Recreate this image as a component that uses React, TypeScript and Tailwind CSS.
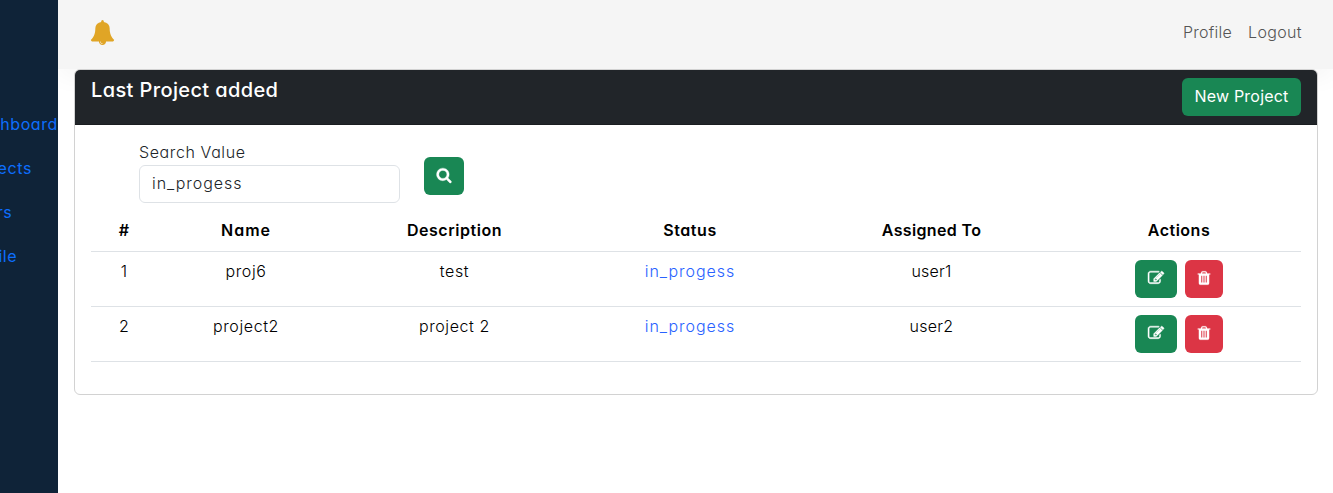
import type { ReactNode } from "react";

const paths = {
  bell: "M912 1696q0-16-16-16-59 0-101.5-42.5t-42.5-101.5q0-16-16-16t-16 16q0 73 51.5 124.5t124.5 51.5q16 0 16-16zm816-288q0 52-38 90t-90 38h-448q0 106-75 181t-181 75-181-75-75-181h-448q-52 0-90-38t-38-90q50-42 91-88t85-119.5 74.5-158.5 50-206 19.5-260q0-152 117-282.5t307-158.5q-8-19-8-39 0-40 28-68t68-28 68 28 28 68q0 20-8 39 190 28 307 158.5t117 282.5q0 139 19.5 260t50 206 74.5 158.5 85 119.5 91 88z",
  search:
    "M1216 832q0-185-131.5-316.5t-316.5-131.5-316.5 131.5-131.5 316.5 131.5 316.5 316.5 131.5 316.5-131.5 131.5-316.5zm512 832q0 52-38 90t-90 38q-54 0-90-38l-343-342q-179 124-399 124-143 0-273.5-55.5t-225-150-150-225-55.5-273.5 55.5-273.5 150-225 225-150 273.5-55.5 273.5 55.5 225 150 150 225 55.5 273.5q0 220-124 399l343 343q37 37 37 90z",
  edit: "M888 1184l116-116-152-152-116 116v56h96v96h56zm440-720q-16-16-33 1l-350 350q-17 17-1 33t33-1l350-350q17-17 1-33zm80 594v190q0 119-84.5 203.5t-203.5 84.5h-832q-119 0-203.5-84.5t-84.5-203.5v-832q0-119 84.5-203.5t203.5-84.5h832q63 0 117 25 15 7 18 23 3 17-9 29l-49 49q-14 14-32 8-23-6-45-6h-832q-66 0-113 47t-47 113v832q0 66 47 113t113 47h832q66 0 113-47t47-113v-126q0-13 9-22l64-64q15-15 35-7t20 29zm-96-738l288 288-672 672h-288v-288zm444 132l-92 92-288-288 92-92q28-28 68-28t68 28l152 152q28 28 28 68t-28 68z",
  trash:
    "M704 1376v-704q0-14-9-23t-23-9h-64q-14 0-23 9t-9 23v704q0 14 9 23t23 9h64q14 0 23-9t9-23zm256 0v-704q0-14-9-23t-23-9h-64q-14 0-23 9t-9 23v704q0 14 9 23t23 9h64q14 0 23-9t9-23zm256 0v-704q0-14-9-23t-23-9h-64q-14 0-23 9t-9 23v704q0 14 9 23t23 9h64q14 0 23-9t9-23zm-544-992h448l-48-117q-7-9-17-11h-317q-10 2-17 11zm928 32v64q0 14-9 23t-23 9h-96v948q0 83-47 143.5t-113 60.5h-832q-66 0-113-58.5t-47-141.5v-952h-96q-14 0-23-9t-9-23v-64q0-14 9-23t23-9h309l70-167q15-37 54-63t79-26h320q40 0 79 26t54 63l70 167h309q14 0 23 9t9 23z",
};

function Icon({ name, className }: { name: keyof typeof paths; className: string }) {
  return (
    <svg viewBox="0 0 1792 1792" fill="currentColor" stroke="currentColor" className={`shrink-0 overflow-visible ${className}`}>
      <path d={paths[name]} />
    </svg>
  );
}

function Cell({ children, className = "" }: { children: ReactNode; className?: string }) {
  return (
    <td className={`border-b border-[#dee2e6] p-2 text-center align-top leading-[22px] ${className}`}>{children}</td>
  );
}

const columns = [
  { label: "#", style: "w-[66px]" },
  { label: "Name", style: "w-[178px] tracking-[1px]" },
  { label: "Description", style: "w-[239px] tracking-[0.55px]" },
  { label: "Status", style: "w-[232px] tracking-[0.6px]" },
  { label: "Assigned To", style: "w-[251px] tracking-[0.35px]" },
  { label: "Actions", style: "w-[244px] tracking-[0.5px]" },
];

const rows = [
  { id: 1, name: "proj6", description: "test", status: "in_progess", user: "user1" },
  { id: 2, name: "project2", description: "project 2", status: "in_progess", user: "user2" },
];

export default function App() {
  return (
    <div className="flex h-[493px] w-full overflow-hidden bg-white font-['Inter',sans-serif] text-base leading-6 font-light text-[#212529] [font-feature-settings:'cv11']">
      <aside className="z-10 flex w-[58px] shrink-0 flex-col items-end gap-5 overflow-hidden bg-[#0f2338] pt-28 font-normal text-[#0d6efd]">
        <a className="tracking-[0.6px]">Dashboard</a>
        <a className="mr-[26px] tracking-[0.6px]">Projects</a>
        <a className="mr-[46px] tracking-[0.4px]">Users</a>
        <a className="mr-[41px] tracking-[0.5px]">Profile</a>
      </aside>
      <main className="flex min-w-0 flex-1 flex-col">
        <nav className="flex h-[69px] shrink-0 items-start justify-between bg-[#f5f5f5] pr-[31px] pl-8 shadow-[0_8px_25px_rgba(0,0,0,0.04)]">
          <Icon name="bell" className="mt-5 size-[25px] text-[#e0a526]" />
          <div className="flex gap-4 pt-5 text-[#555]">
            <a className="tracking-[0.25px]">Profile</a>
            <a className="tracking-[0.35px]">Logout</a>
          </div>
        </nav>
        <section className="z-10 mr-[15px] ml-4 h-[326px] overflow-hidden rounded-md border border-[#d2d2d2] bg-white">
          <header className="flex h-[55px] items-start justify-between border-b border-[#1a1d20] bg-[#212529] px-4 pt-2 text-white">
            <h5 className="text-xl leading-6 font-medium tracking-[0.38px]">Last Project added</h5>
            <button className="h-[38px] w-[119px] rounded-md bg-[#198754] pb-0.5 font-normal tracking-[0.2px]">
              New Project
            </button>
          </header>
          <div className="px-4 pt-4">
            <div className="flex gap-6 pl-12">
              <div className="w-[261px]">
                <label className="block h-6 leading-[22px] tracking-[0.6px]">Search Value</label>
                <input
                  className="block h-[38px] w-full rounded-md border border-[#dee2e6] bg-white px-3 pb-0.5 font-light tracking-[0.95px] outline-none"
                  defaultValue="in_progess"
                />
              </div>
              <button className="mt-4 flex h-[38px] w-10 items-center justify-center rounded-md bg-[#198754] pb-0.5 text-white">
                <Icon name="search" className="size-4 stroke-[40]" />
              </button>
            </div>
            <table className="mt-[7px] w-full table-fixed border-collapse text-black">
              <thead>
                <tr className="h-[41px]">
                  {columns.map((c) => (
                    <th key={c.label} className={`border-b border-[#dee2e6] p-2 font-semibold ${c.style}`}>
                      {c.label}
                    </th>
                  ))}
                </tr>
              </thead>
              <tbody>
                {rows.map((r) => (
                  <tr key={r.id} className="h-[55px]">
                    <Cell>{r.id}</Cell>
                    <Cell className="tracking-[0.6px]">{r.name}</Cell>
                    <Cell className="tracking-[0.6px]">{r.description}</Cell>
                    <Cell className="tracking-[0.95px] text-[#2962ff]">{r.status}</Cell>
                    <Cell className="tracking-[0.25px]">{r.user}</Cell>
                    <Cell>
                      <div className="flex justify-center gap-2 text-white">
                        <button className="flex h-[38px] w-[42px] items-center justify-center rounded-md bg-[#198754] pb-0.5">
                          <Icon name="edit" className="size-4 stroke-[50]" />
                        </button>
                        <button className="flex h-[38px] w-[38px] items-center justify-center rounded-md bg-[#dc3545] pb-0.5">
                          <Icon name="trash" className="size-4 stroke-[20]" />
                        </button>
                      </div>
                    </Cell>
                  </tr>
                ))}
              </tbody>
            </table>
          </div>
        </section>
      </main>
    </div>
  );
}
